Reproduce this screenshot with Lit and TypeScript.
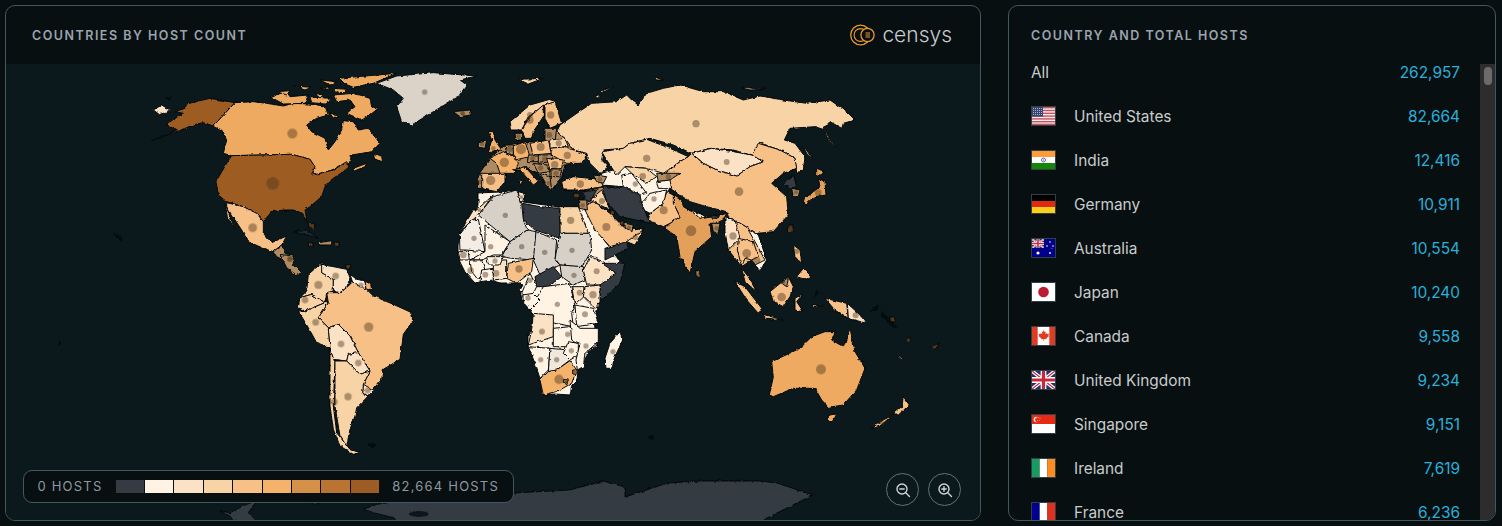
import { LitElement, html, css, svg } from "lit";
import { customElement } from "lit/decorators.js";

const Z = "#363a42", A = "#fff3e4", B = "#fce2c5", C = "#f8d3a6", D = "#f6c086", E = "#f5b26b", F = "#e3a05a", H = "#9c5c24", X = "#d6d0c6", K = "#eeaa60", N = "#b08a60", M = "#5a3c20";

type Shape = [string, string, ...number[]];
type Crop = { tx: number; ty: number; shapes: Shape[] };

const CROPS: Crop[] = [
  { tx: 0, ty: 0, shapes: [
    [H, "705,308 660,300 630,295 560,312 555,325 525,335 550,340 520,358 500,375 530,390 500,405 455,422 520,398 590,372 610,368 640,378", ],
    [K, "705,308 760,305 800,310 850,318 880,310 925,312 975,318 985,345 950,355 920,375 935,395 975,415 985,450 1005,425 1025,390 1030,362 1060,365 1075,390 1105,385 1140,430 1115,455 1055,465 1048,490 1020,500 990,512 960,520 935,528 945,505 930,478 875,463 695,467 670,460 680,420 665,390 640,378", 877, 401, 15],
    [K, "810,290 860,275 870,290 925,285 915,310 850,312"],
    [K, "880,258 935,262 915,270"],
    [K, "960,240 1010,245 990,255"],
    [K, "1015,235 1190,220 1120,250 1060,262 1030,250"],
    [K, "960,265 990,260 985,268"],
    [K, "1000,285 1060,280 1110,295 1115,320 1135,325 1110,345 1085,360 1040,340 1065,320 1050,300 1010,305"],
    [K, "945,280 970,285 960,295"],
    [K, "990,340 1020,345 1000,355"],
    [K, "1000,265 1040,268 1030,278 1005,276"],
    [K, "830,275 870,272 860,285"],
    [K, "930,290 990,295 975,312 935,308"],
    [K, "1120,460 1145,470 1148,485 1125,478"],
    [K, "1060,505 1100,490 1095,500 1065,512"],
    [B, "460,330 485,315 510,330 480,345"],
    ["#050a0c", "495,295 515,292 510,298"],
    [H, "695,467 875,463 930,478 945,500 935,525 960,520 1000,510 1040,485 1048,500 1030,515 1000,535 975,560 965,590 930,620 915,630 922,670 908,640 880,630 850,630 815,635 790,665 770,640 730,620 680,605 655,585 648,545 680,490", 818, 550, 19],
    [D, "680,608 730,620 770,640 790,665 790,700 815,728 860,708 845,735 820,755 790,745 745,725 725,690 695,645 680,620", 758, 683, 13],
    [D, "675,610 690,650 705,688 682,650"],
    [N, "820,755 845,735 855,760 885,770 880,790 850,780 830,770", 870, 775, 8],
    ["#1a2a33", "880,695 920,690 955,715 920,705"],
    [N, "955,728 995,722 995,735 955,735"],
    [M, "925,670 945,672 942,688 928,686", 935, 678, 5],
    [M, "925,728 940,728 938,740 925,740"],
    [M, "1003,725 1018,728 1016,740 1004,738"],
    ["#050a0c", "340,700 365,712 365,724 352,712"],
    ["#dbd3c8", "1190,228 1300,218 1430,228 1380,240 1400,255 1375,290 1350,305 1300,335 1235,375 1205,365 1190,320 1210,295 1180,270 1130,250", 1274, 276, 8],
    [C, "1365,340 1410,332 1415,345 1380,350", 1388, 341, 6],
  ]},
  { tx: 0, ty: 256, shapes: [
    [N, "840,-5 880,0 880,25 905,50 890,58 860,35", 870, 10, 8],
    [C, "960,25 925,55 920,105 900,125 935,115 975,140 980,110 1000,105 1000,70 965,50 970,20", 955, 87, 12],
    [B, "965,25 1040,40 1050,65 1040,95 1020,110 1000,105 1000,70 965,50", 1007, 60, 10],
    [M, "1038,25 1052,27 1048,40 1038,36"],
    [A, "1050,55 1070,70 1100,75 1095,100 1060,85", 1083, 87, 8],
    [E, "1095,75 1112,85 1115,100 1098,100"],
    [D, "1055,80 1100,100 1120,120 1180,145 1235,170 1238,195 1210,235 1200,310 1150,340 1145,370 1115,405 1090,385 1110,345 1075,290 1050,240 1015,205 985,215 955,185 985,140 980,110 1020,110 1040,95", 1106, 213, 14],
    [C, "900,125 935,115 975,140 915,165 895,155", 915, 132, 10],
    [C, "915,165 975,140 985,140 955,185 985,215 990,275 950,260 925,215 895,165", 947, 199, 10],
    [B, "1015,205 1050,240 1075,290 1045,295 1040,315 1000,310 990,275 985,215", 1023, 264, 10],
    [B, "1075,290 1110,345 1080,355 1040,315 1045,295", 1075, 321, 10],
    [B, "1090,385 1125,405 1100,420 1088,410", 1103, 403, 9],
    [C, "990,280 1005,320 1000,450 1010,530 1050,580 1080,590 1060,595 1020,570 1000,520 990,450", 1003, 438, 10],
    [C, "1005,315 1040,315 1080,355 1110,345 1090,385 1088,410 1100,425 1070,455 1065,480 1050,520 1040,570 1020,540 1005,450", 1044, 422, 11],
    ["#050a0c", "1105,565 1125,562 1125,570 1108,570"],
    ["#050a0c", "175,258 180,258 180,265 175,265"],
    [Z, "660,765 690,770 740,745 770,735 745,770 765,790 770,800 700,795 690,780"],
    [Z, "1090,760 1130,745 1200,735 1300,720 1539,711 1710,702 1809,675 1875,693 1875,723 2004,681 2100,675 2280,675 2331,681 2439,717 2349,762 2289,792 2289,800 1200,800 1180,785 1120,770"],
    [Z, "925,738 965,738 945,745"],
  ]},
  { tx: 450, ty: 60, shapes: [
    [A, "84,399 150,396 198,390 222,405 219,426 285,435 324,441 384,441 414,441 420,465 450,525 486,570 510,606 525,609 504,675 450,726 432,780 441,855 414,876 399,915 384,930 381,960 366,975 360,1005 315,1002 276,1005 270,960 255,915 234,855 234,825 255,795 249,756 216,720 210,690 219,675 204,669 150,669 120,660 75,669 45,636 30,606 24,585 24,555 30,525 45,495 75,465 84,435"],
    [N, "85,345 120,295 165,255 240,245 300,240 320,215 345,235 410,280 395,310 345,315 335,350 305,390 290,375 265,340 225,320 190,330 165,340 165,365 140,395 90,385"],
    [C, "395,150 425,130 500,125 530,105 545,120 565,135 590,100 640,85 690,75 760,95 820,95 880,120 930,108 1000,120 1070,130 1140,120 1190,155 1215,180 1180,190 1175,205 1140,185 1120,205 1135,240 1165,268 1140,240 1125,210 1095,200 1020,205 1003,240 1035,250 1065,290 1060,330 1040,340 1035,295 990,270 930,250 905,285 850,270 780,265 725,280 670,255 600,235 540,250 520,265 460,270 455,300 475,320 450,340 420,310 410,280 370,270 345,235 320,215 330,195", 738, 191, 11],
    [C, "1055,250 1090,300 1070,280"],
    [C, "435,110 500,75 450,95 445,115"],
    [C, "205,58 280,55 235,72"],
    [C, "610,50 640,60 620,60"],
    [C, "875,82 945,88 900,90"],
    [A, "455,340 525,320 690,305 660,385 600,460 575,430 520,380 455,375"],
    [N, "400,395 460,380 480,450 430,425 400,440"],
    [D, "825,470 880,495 920,520 950,600 930,632 905,600 875,620 835,570"],
    [C, "455,275 520,265 540,250 590,238 660,265 715,290 690,305 640,340 590,325 525,320 500,345 470,300", 590, 295, 11],
    [B, "725,280 785,265 850,275 905,285 940,305 900,320 860,348 800,330 760,310", 830, 306, 9],
    [D, "715,290 725,280 760,310 800,330 860,348 900,320 940,305 905,285 925,250 990,270 1035,295 1040,325 1000,340 965,370 1010,410 1015,465 970,515 920,520 880,495 835,470 830,455 770,440 720,425 660,385 640,345 690,305", 867, 395, 13],
    [F, "670,405 695,420 700,440 760,475 790,470 835,460 805,490 780,490 785,530 735,575 720,640 690,590 680,530 645,505 660,490 690,470 670,430", 723, 512, 16],
    [D, "650,395 670,405 670,430 690,470 660,490 640,500 595,480 600,460 640,430", 641, 451, 12],
    [A, "575,430 600,400 650,390 640,430 600,460 580,450", 612, 417, 8],
    [Z, "455,375 490,385 520,380 570,405 575,430 600,490 560,480 510,470 470,425"],
    [A, "515,345 545,340 590,400 570,405 520,380", 556, 372, 8],
    [C, "525,320 590,325 620,350 590,370 545,340", 578, 349, 10],
    [N, "620,340 690,340 660,360 625,365", 655, 350, 8],
    [A, "620,365 660,360 665,385 625,385"],
    [D, "335,365 370,350 450,358 460,380 400,390 340,390", 391, 372, 11],
    [N, "430,345 470,350 460,370 440,365", 450, 358, 7],
    [M, "370,400 388,400 388,415 372,415", 379, 408, 6],
    [D, "400,440 430,425 480,460 520,500 580,510 525,555 480,560 435,510", 469, 501, 12],
    [Z, "465,565 530,545 535,565 465,600"],
    [C, "530,545 580,510 555,555", 556, 532, 8],
    [N, "525,490 550,495 545,515 525,505", 537, 503, 6],
    [C, "420,420 455,390 480,450 430,425", 456, 423, 9],
    [Z, "405,395 440,390 420,425 400,420"],
    [N, "385,420 410,420 412,450 388,445", 398, 436, 7],
    [M, "480,450 495,452 492,465 482,462", 487, 457, 5],
    [M, "508,483 522,483 520,497 508,497", 516, 490, 6],
    [C, "330,440 385,440 415,520 330,520", 362, 481, 11],
    [Z, "218,430 270,440 328,445 330,535 255,510 220,480"],
    [X, "85,465 130,410 200,390 215,430 220,480 232,510 180,545", 166, 466, 8],
    [B, "205,395 225,400 218,425 210,425", 214, 412, 6],
    [B, "80,450 130,405 85,465 45,500 28,520 70,450", 88, 450, 6],
    ["#f3ede3", "28,525 65,480 85,478 105,575 45,570 30,570", 72, 535, 8],
    [A, "105,495 180,545 155,585 130,585 95,600 60,600 105,575", 122, 560, 8],
    [X, "180,545 232,510 258,515 260,570 250,600 185,595 155,590", 215, 560, 8],
    [X, "258,515 320,540 315,600 330,615 270,645 250,600", 284, 577, 8],
    [X, "330,520 420,520 425,570 400,615 385,620 330,615 315,595", 366, 571, 8],
    [X, "330,615 400,620 405,660 370,675 335,650", 372, 646, 8],
    [D, "175,610 250,595 245,635 200,670 170,655", 207, 627, 11],
    [Z, "255,650 310,620 335,650 295,680 260,680"],
    [B, "400,630 420,590 460,605 500,640 470,675 410,675", 440, 634, 9],
    [Z, "455,610 525,610 510,670 450,725 450,675 500,640"],
    [B, "405,680 450,675 450,725 435,745 400,710", 429, 704, 11],
    [A, "215,700 240,640 260,680 250,700 230,710", 240, 661, 8],
    [A, "280,680 360,670 375,740 365,760 370,800 315,790 250,765 240,750", 322, 733, 8],
    [B, "365,680 402,680 400,712 375,735", 389, 698, 9],
    [A, "375,735 430,745 445,790 380,800", 405, 763, 9],
    [A, "218,705 250,700 270,720 240,750 222,730", 234, 714, 8],
    [A, "25,575 55,575 58,600 30,600", 40, 585, 10],
    [A, "60,600 95,600 105,630 85,660 65,635", 62, 632, 10],
    [A, "95,630 130,625 130,660 90,665", 106, 644, 9],
    [B, "130,600 170,600 170,655 130,660", 138, 640, 10],
    [A, "110,590 160,590 150,615 115,615", 135, 603, 8],
    // Southeast Asia
    [B, "825,470 855,480 870,535 835,570 825,515", 849, 528, 11],
    [N, "785,490 810,490 805,520 790,515", 800, 505, 7],
    [B, "720,450 775,470 750,475"],
    [Z, "780,465 810,470 790,480"],
    [D, "865,535 910,545 925,590 905,600 885,595 875,620 862,570", 890, 580, 13],
    [A, "895,510 925,525 950,600 930,632 915,615 945,600 915,545", 920, 601, 11],
    [D, "875,625 895,650 920,695 885,665"],
    [D, "855,665 885,680 935,745 925,760 890,720"],
    [D, "935,762 1000,780 950,775"],
    [D, "960,695 1015,650 1030,680 1020,710 1000,740 970,725", 995, 711, 13],
    [N, "995,670 1015,655 1010,680", 1000, 670, 5],
    [D, "1035,715 1060,700 1040,725 1060,755 1035,750"],
    [D, "1030,555 1050,570 1055,610 1035,590", 1040, 574, 8],
    [D, "1060,625 1085,650 1070,660 1040,650"],
    [D, "1125,715 1190,730 1195,775 1150,745"],
    [B, "1192,730 1230,765 1250,790 1195,775", 1217, 766, 9],
    [F, "1100,325 1125,335 1100,350"],
    [F, "1105,355 1125,365 1128,405 1095,410 1075,425 1070,438 1060,420 1090,395 1110,380", 1105, 398, 10],
    [Z, "1000,370 1030,345 1040,380 1020,385"],
    [N, "1025,385 1050,390 1045,410 1030,410", 1038, 397, 6],
    [M, "1015,495 1030,495 1025,520 1012,515", 1022, 505, 6],
    [N, "738,630 752,645 745,658 738,645", 745, 645, 5],
    [M, "1320,770 1335,775 1330,788 1318,782", 1327, 778, 6],
    ["#050a0c", "1100,690 1105,700 1095,710"],
    ["#050a0c", "1260,755 1285,735 1280,750"],
    ["#050a0c", "1295,755 1340,800 1335,805 1295,770"],
    [D, "1085,735 1120,738 1090,742"],
    // Europe
    [N, "10,155 60,150 65,165 30,170", 38, 160, 7],
    [E, "115,215 130,215 135,240 155,270 115,275 125,240", 130, 265, 7],
    [N, "85,245 110,240 105,265 85,262", 96, 252, 7],
    [C, "180,185 240,135 300,118 320,125 285,135 235,170 215,210 185,210", 240, 165, 9],
    [D, "215,210 240,170 280,135 280,170 250,215 245,235 225,235", 240, 180, 11],
    [D, "285,135 315,125 335,190 300,205 285,175", 302, 165, 11],
    [N, "195,220 215,220 215,240 198,240", 206, 230, 7],
    [N, "285,205 320,205 315,245 285,245", 298, 225, 9],
    [E, "120,295 160,275 195,290 205,310 195,340 150,340 140,310", 163, 307, 14],
    [E, "185,260 225,245 240,290 195,300", 213, 268, 15],
    [N, "165,255 190,255 190,285 170,280", 180, 267, 9],
    [D, "90,340 165,340 165,365 140,395 90,385", 122, 361, 14],
    [N, "85,345 95,345 95,385 85,385", 90, 365, 7],
    [E, "190,330 225,320 265,365 250,375 210,330"],
    [E, "205,360 218,362 212,375"],
    [D, "240,250 295,240 305,280 250,285", 272, 261, 12],
    [C, "300,240 345,235 355,260 300,265", 326, 250, 9],
    [D, "300,265 345,260 410,285 395,310 350,310 305,285", 352, 286, 11],
    [N, "235,285 270,285 265,305 232,305", 248, 295, 8],
    [N, "265,285 305,285 305,305 265,310", 285, 297, 9],
    [D, "290,295 340,300 335,325 300,330", 314, 314, 11],
    [N, "250,310 290,315 300,335 265,340", 272, 324, 8],
    [N, "300,330 335,330 330,350 300,350", 318, 340, 8],
    [N, "270,340 300,350 305,390 290,375", 297, 370, 7],
  ]},
  { tx: 500, ty: 300, shapes: [
    [B, "100,40 160,45 160,110 85,135 95,90", 126, 95, 9],
    [A, "160,85 210,80 245,110 200,140 160,140", 203, 103, 8],
    [A, "85,140 150,145 145,210 120,235 105,190", 122, 179, 8],
    ["#f0e8dc", "150,145 205,150 210,180 170,210 145,215", 170, 179, 8],
    [A, "205,125 235,130 235,165 210,180 190,160", 214, 152, 8],
    [A, "210,60 240,85 295,85 295,125 255,160 250,200 232,210 228,180 240,130 215,120", 258, 138, 8],
    [E, "120,240 145,215 170,210 210,182 230,210 215,250 170,275 130,285", 177, 238, 14],
    [N, "190,238 205,240 200,252 190,250", 198, 245, 5],
    [N, "218,210 232,210 230,224 218,222", 224, 217, 5],
    [A, "360,95 368,120 345,170 335,205 318,205 315,175 330,130", 339, 155, 8],
    ["#050a0c", "445,410 460,408 460,416 447,418"],
    [K, "815,185 900,145 935,110 975,95 1005,95 995,120 1030,140 1050,85 1065,155 1095,205 1070,270 1030,315 985,322 965,300 945,265 880,265 820,290 808,285 820,230", 963, 208, 15],
    [K, "985,345 1010,342 1000,362 985,362"],
    [D, "1210,290 1228,315 1195,345 1180,340 1205,320"],
    [D, "1178,345 1140,378 1110,388 1150,360", 1145, 368, 7],
    [M, "1220,115 1232,115 1228,128 1220,125", 1225, 120, 6],
    [N, "1195,165 1210,178 1205,180 1195,170"],
    [M, "1295,140 1320,128 1305,148", 1300, 142, 5],
    [M, "1170,55 1182,50 1186,65 1172,65", 1177, 58, 6],
  ]},
];

type Row = { name: string; value: string; flag: string };
const ROWS: Row[] = [
  { name: "United States", value: "82,664", flag: "us" },
  { name: "India", value: "12,416", flag: "in" },
  { name: "Germany", value: "10,911", flag: "de" },
  { name: "Australia", value: "10,554", flag: "au" },
  { name: "Japan", value: "10,240", flag: "jp" },
  { name: "Canada", value: "9,558", flag: "ca" },
  { name: "United Kingdom", value: "9,234", flag: "gb" },
  { name: "Singapore", value: "9,151", flag: "sg" },
  { name: "Ireland", value: "7,619", flag: "ie" },
  { name: "France", value: "6,236", flag: "fr" },
];

const union = (w: number, h: number) => svg`
  <rect width=${w} height=${h} fill="#1f2f6b"/>
  <path d="M0 0L${w} ${h}M${w} 0L0 ${h}" stroke="#fff" stroke-width=${h * 0.2}/>
  <path d="M0 0L${w} ${h}M${w} 0L0 ${h}" stroke="#c8283c" stroke-width=${h * 0.07}/>
  <path d="M${w / 2} 0V${h}M0 ${h / 2}H${w}" stroke="#fff" stroke-width=${h * 0.32}/>
  <path d="M${w / 2} 0V${h}M0 ${h / 2}H${w}" stroke="#c8283c" stroke-width=${h * 0.18}/>`;

const flags: Record<string, unknown> = {
  us: svg`<rect width="23" height="18" fill="#f4f0f0"/>
    ${[0, 2.8, 5.6, 8.4, 11.2, 14, 16.6].map((y) => svg`<rect y=${y} width="23" height="1.4" fill="#c9505c"/>`)}
    <rect width="11" height="9.6" fill="#3a4272"/>
    ${[1.5, 3.5, 5.5, 7.5].map((y) => [1.5, 3.5, 5.5, 7.5, 9.5].map((x) => svg`<circle cx=${x} cy=${y} r=".5" fill="#cfd3e6"/>`))}`,
  in: svg`<rect width="23" height="6" fill="#ff9c38"/><rect y="6" width="23" height="6" fill="#fff"/><rect y="12" width="23" height="6" fill="#138808"/>
    <circle cx="11.5" cy="9" r="2" fill="none" stroke="#3a3a9c" stroke-width=".8"/><circle cx="11.5" cy="9" r=".6" fill="#3a3a9c"/>`,
  de: svg`<rect width="23" height="6" fill="#000"/><rect y="6" width="23" height="6" fill="#dd2a10"/><rect y="12" width="23" height="6" fill="#ffce1c"/>`,
  au: svg`<rect width="23" height="18" fill="#00008b"/><svg width="12" height="9" viewBox="0 0 12 9">${union(12, 9)}</svg>
    ${[[6, 14, 1.6], [18, 3, .8], [15, 7, .8], [21, 7, .8], [18, 14, .9], [20, 9.5, .4]].map(([x, y, r]) => svg`<circle cx=${x} cy=${y} r=${r} fill="#fff"/>`)}`,
  jp: svg`<rect width="23" height="18" fill="#fff"/><circle cx="11.5" cy="9" r="5.3" fill="#bc1c33"/>`,
  ca: svg`<rect width="23" height="18" fill="#fff"/><rect width="5.7" height="18" fill="#e03c24"/><rect x="17.3" width="5.7" height="18" fill="#e03c24"/>
    <path d="M11.5 3l1.1 2 1.2-.6-.5 2.9 1.5-1.3.4 1 1.8-.3-.6 2 .8.4-2.8 2.2.3 1-2.6-.4v2.1h-.6v-2.1l-2.6.4.3-1-2.8-2.2.8-.4-.6-2 1.8.3.4-1 1.5 1.3-.5-2.9 1.2.6z" fill="#e03c24"/>`,
  gb: union(23, 18),
  sg: svg`<rect width="23" height="9" fill="#e62b14"/><rect y="9" width="23" height="9" fill="#fff"/>
    <circle cx="4.5" cy="4.5" r="2.8" fill="#fff"/><circle cx="5.7" cy="4.5" r="2.6" fill="#e62b14"/>
    ${[[6, 2.5], [8, 3.2], [7.5, 5.4], [5.4, 5.6], [4.8, 3.6]].map(([x, y]) => svg`<circle cx=${x} cy=${y} r=".45" fill="#fff"/>`)}`,
  ie: svg`<rect width="7.7" height="18" fill="#169b62"/><rect x="7.7" width="7.7" height="18" fill="#fff"/><rect x="15.4" width="7.6" height="18" fill="#ff8c22"/>`,
  fr: svg`<rect width="7.7" height="18" fill="#000091"/><rect x="7.7" width="7.7" height="18" fill="#fff"/><rect x="15.4" width="7.6" height="18" fill="#e1301e"/>`,
};

const SWATCHES = ["#363a42", "#fff3e4", "#fce2c5", "#f8d3a6", "#f6c086", "#f5b26b", "#d59147", "#b97433", "#9c5c24"];

@customElement("app-root")
export class AppRoot extends LitElement {
  static styles = css`
    :host {
      display: flex;
      gap: 27px;
      box-sizing: border-box;
      width: 1502px;
      height: 526px;
      padding: 5px 6px 5px 5px;
      background: #070f11;
      font-family: Inter, "Liberation Sans", sans-serif;
      overflow: hidden;
    }
    .card {
      box-sizing: border-box;
      height: 516px;
      border: 1px solid #41595e;
      border-radius: 10px;
      overflow: hidden;
      display: flex;
      flex-direction: column;
      background: #070f11;
    }
    .left { width: 976px; flex: none; position: relative; }
    .right { flex: 1; }
    .header {
      height: 58px;
      flex: none;
      box-sizing: border-box;
      padding: 0 28px 0 26px;
      display: flex;
      align-items: center;
      justify-content: space-between;
    }
    .right .header { padding-left: 22px; }
    .title {
      font-size: 12.5px;
      font-weight: 600;
      letter-spacing: 1.5px;
      color: #9ba3ad;
    }
    .logo { display: flex; align-items: center; gap: 7px; }
    .logo span {
      font-size: 21px;
      font-weight: 300;
      color: #c8ccd0;
      line-height: 24px;
    }
    .map { flex: 1; min-height: 0; background: #0b191d; }
    .map svg { display: block; }
    .legend {
      position: absolute;
      left: 17px;
      top: 464px;
      box-sizing: border-box;
      width: 491px;
      height: 33px;
      padding: 0 14px 2px 13.5px;
      display: flex;
      align-items: center;
      justify-content: space-between;
      background: #070f11;
      border: 1px solid #41595e;
      border-radius: 9px;
      font-size: 13px;
      letter-spacing: 1.2px;
      color: #8f98a1;
    }
    .swatches { display: flex; gap: 1px; margin-top: 2px; }
    .swatches i { display: block; width: 28.4px; height: 13px; }
    .zoom {
      position: absolute;
      left: 880px;
      top: 467px;
      display: flex;
      gap: 9px;
    }
    .zoom div {
      box-sizing: border-box;
      width: 33px;
      height: 33px;
      border: 1px solid #5f7479;
      border-radius: 50%;
      display: flex;
      align-items: center;
      justify-content: center;
    }
    .body { flex: 1; min-height: 0; display: flex; }
    .list { flex: 1; min-width: 0; overflow: hidden; padding: 0 20px 0 22px; }
    .row {
      height: 44px;
      display: flex;
      align-items: center;
      font-size: 15.4px;
      color: #c9cccd;
    }
    .row.all { height: 16px; margin-bottom: 14px; }
    .flag {
      box-sizing: border-box;
      flex: none;
      width: 25px;
      height: 20px;
      border: 1px solid #2e4146;
      margin-right: 18px;
      display: block;
      overflow: hidden;
    }
    .flag svg { display: block; }
    .name { flex: 1; }
    .val { color: #2bb0da; }
    .track { width: 15px; flex: none; background: #2d2d2d; padding: 3px 3px 0 4px; box-sizing: border-box; }
    .thumb { height: 18px; border-radius: 4px; background: #6b6b6b; }
  `;

  render() {
    return html`
      <section class="card left">
        <header class="header">
          <div class="title">COUNTRIES BY HOST COUNT</div>
          <div class="logo">
            <svg width="25" height="22" viewBox="0 0 25 22" fill="none" stroke="#e8982e">
              <circle cx="10.5" cy="11" r="9.8" stroke-width="1.3"/>
              <circle cx="10.5" cy="11" r="6.4" stroke-width="1.1"/>
              <circle cx="17.5" cy="11" r="6.6" fill="#070f11" stroke-width="1.3"/>
              <path d="M20 9h-4.5M20 11h-4.5M20 13h-4.5" stroke-width="1"/>
            </svg>
            <span>censys</span>
          </div>
        </header>
        <div class="map">
          <svg width="974" height="456" viewBox="6 64 974 456" stroke-linejoin="round">
            <defs>
              <filter id="rough" filterUnits="userSpaceOnUse" x="6" y="64" width="974" height="456">
                <feTurbulence type="fractalNoise" baseFrequency="0.22" numOctaves="2" seed="4"/>
                <feDisplacementMap in="SourceGraphic" scale="3" xChannelSelector="R" yChannelSelector="G"/>
              </filter>
            </defs>
            <g filter="url(#rough)">
              ${CROPS.map((c) => svg`
                <g transform="translate(${c.tx} ${c.ty}) scale(.33333)" stroke="#050a0c" stroke-width="3">
                  ${c.shapes.map((s) => svg`<polygon points=${s[1]} fill=${s[0]}/>`)}
                </g>`)}
              <ellipse cx="419" cy="514" rx="10" ry="3" fill="#0b191d"/>
            </g>
            ${CROPS.map((c) => svg`
              <g transform="translate(${c.tx} ${c.ty}) scale(.33333)">
                ${c.shapes.filter((s) => s.length > 2).map((s) => svg`<circle cx=${s[2]} cy=${s[3]} r=${s[4]} fill="#50371e" fill-opacity=".45"/>`)}
              </g>`)}
          </svg>
        </div>
        <div class="legend">
          <span>0 HOSTS</span>
          <div class="swatches">${SWATCHES.map((c) => html`<i style="background:${c}"></i>`)}</div>
          <span>82,664 HOSTS</span>
        </div>
        <div class="zoom">
          <div>
            <svg width="16" height="16" viewBox="0 0 16 16" fill="none" stroke="#cfd5d6" stroke-width="1.4" stroke-linecap="round">
              <circle cx="7" cy="7" r="5"/><path d="M11 11l3.5 3.5M4.8 7h4.4"/>
            </svg>
          </div>
          <div>
            <svg width="16" height="16" viewBox="0 0 16 16" fill="none" stroke="#cfd5d6" stroke-width="1.4" stroke-linecap="round">
              <circle cx="7" cy="7" r="5"/><path d="M11 11l3.5 3.5M4.8 7h4.4M7 4.8v4.4"/>
            </svg>
          </div>
        </div>
      </section>
      <section class="card right">
        <header class="header"><div class="title">COUNTRY AND TOTAL HOSTS</div></header>
        <div class="body">
          <div class="list">
            <div class="row all"><span class="name">All</span><span class="val">262,957</span></div>
            ${ROWS.map((r) => html`
              <div class="row">
                <span class="flag"><svg width="23" height="18" viewBox="0 0 23 18">${flags[r.flag]}</svg></span>
                <span class="name">${r.name}</span>
                <span class="val">${r.value}</span>
              </div>`)}
          </div>
          <div class="track"><div class="thumb"></div></div>
        </div>
      </section>
    `;
  }
}
